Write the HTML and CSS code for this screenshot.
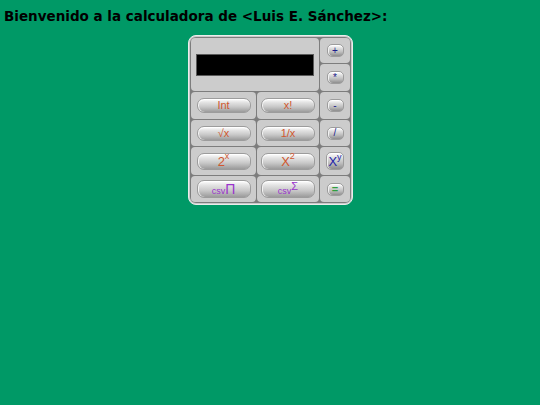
FILE: index.html
```html
<!DOCTYPE html>
<html lang="es">
<head>
<meta charset="utf-8">
<title>Calculadora</title>
<link rel="stylesheet" href="styles.css">
</head>
<body>
<h1 class="title">Bienvenido a la calculadora de &lt;Luis E. Sánchez&gt;:</h1>
<div class="calc">
  <div class="grid">
    <div class="cell display-cell"><div class="display"></div></div>
    <div class="cell op-cell"><button class="btn op">+</button></div>
    <div class="cell op-cell"><button class="btn op">*</button></div>

    <div class="cell"><button class="btn fn">Int</button></div>
    <div class="cell"><button class="btn fn">x!</button></div>
    <div class="cell op-cell"><button class="btn op">-</button></div>

    <div class="cell"><button class="btn fn">√x</button></div>
    <div class="cell"><button class="btn fn">1/x</button></div>
    <div class="cell op-cell"><button class="btn op">/</button></div>

    <div class="cell"><button class="btn fn big">2<sup>x</sup></button></div>
    <div class="cell"><button class="btn fn big">X<sup>2</sup></button></div>
    <div class="cell op-cell"><button class="btn op pow">X<sup>y</sup></button></div>

    <div class="cell"><button class="btn csv"><span class="small">csv</span><span class="sym">Π</span></button></div>
    <div class="cell"><button class="btn csv"><span class="small">csv</span><sup class="sym2">Σ</sup></button></div>
    <div class="cell op-cell"><button class="btn op eq">=</button></div>
  </div>
</div>
</body>
</html>
```

FILE: styles.css
```css
html, body {
  margin: 0;
  padding: 0;
  background: #009966;
}

body {
  font-family: "Liberation Sans", Arial, sans-serif;
}

.title {
  margin: 0;
  padding: 8px 0 0 4px;
  font-family: "DejaVu Sans", Verdana, sans-serif;
  font-weight: bold;
  font-size: 13.5px;
  line-height: 16px;
  color: #000;
}

.calc {
  margin: 11px 0 0 188px;
  border: 1px solid #ececec;
  border-radius: 8px;
  background: #c9c9c9;
  padding: 1px;
  box-sizing: border-box;
  width: 165px;
}

.grid {
  display: grid;
  grid-template-columns: 65px 62px 30px;
  grid-template-rows: 25px 27px 27px 26px 28px 26px;
  gap: 1px;
  padding: 1px;
  background: #7d7d7d;
  border-radius: 6px;
}

.cell {
  background: #cccccc;
  border-radius: 4px;
  display: flex;
  align-items: center;
  justify-content: center;
}

.display-cell {
  grid-column: 1 / 3;
  grid-row: 1 / 3;
}

.display {
  width: 118px;
  height: 22px;
  background: #000;
  border: 1px solid #5a5a5a;
  box-sizing: border-box;
  margin: 1px 1px 0 0;
}

.btn {
  margin: 0;
  padding: 0;
  border: 1px solid #9c9c9c;
  border-radius: 7px;
  background: linear-gradient(to bottom, #ffffff 0%, #e4e4e4 25%, #c8c8c8 60%, #9b9b9b 100%);
  box-shadow: inset 0 1px 0 #fff, inset 1px 0 0 #f2f2f2;
  font-family: "Liberation Sans", Arial, sans-serif;
  line-height: 1;
  display: flex;
  align-items: center;
  justify-content: center;
  cursor: pointer;
}

.fn {
  width: 54px;
  height: 15px;
  font-size: 11px;
  color: #d0572f;
}

.fn.big {
  height: 17px;
  font-size: 13px;
}

.fn sup {
  font-size: 9px;
  line-height: 1;
  vertical-align: 0;
  position: relative;
  top: -5px;
}

.csv {
  width: 54px;
  height: 18px;
  color: #9a33cc;
}

.csv .small {
  font-size: 9px;
  margin-top: 5px;
}

.csv .sym {
  font-size: 14px;
  line-height: 1;
}

.csv .sym2 {
  font-size: 11px;
  line-height: 1;
  position: relative;
  top: -3px;
}

.op {
  width: 17px;
  height: 13px;
  border-radius: 5px;
  font-size: 10px;
  color: #1c1c8c;
  background: linear-gradient(to bottom, #ffffff 0%, #dedede 30%, #bcbcbc 65%, #8e8e8e 100%);
}

.op.pow {
  width: 18px;
  height: 18px;
  font-size: 13px;
  color: #1f1fa8;
}

.op.pow sup {
  font-size: 9px;
  position: relative;
  top: -4px;
  vertical-align: 0;
}

.op.eq {
  color: #2f9e3f;
  font-weight: bold;
  font-size: 11px;
}
```
